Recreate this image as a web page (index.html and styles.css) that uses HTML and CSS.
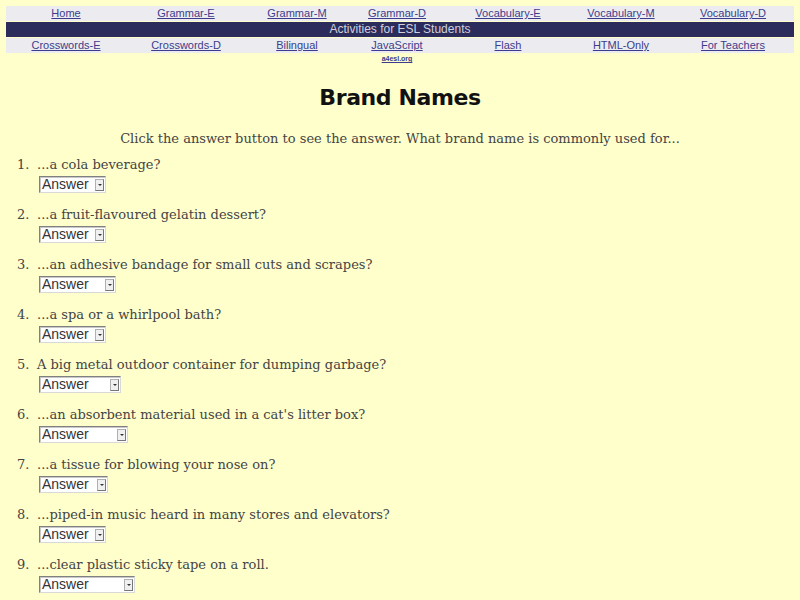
FILE: index.html
```html
<!DOCTYPE html>
<html>
<head>
<meta charset="utf-8">
<title>Brand Names</title>
<link rel="stylesheet" href="styles.css">
</head>
<body>
<div class="nav">
  <div class="nav-row">
    <a href="#">Home</a><a href="#">Grammar-E</a><a href="#">Grammar-M</a><a href="#">Grammar-D</a><a href="#">Vocabulary-E</a><a href="#">Vocabulary-M</a><a href="#">Vocabulary-D</a>
  </div>
  <div class="nav-title">Activities for ESL Students</div>
  <div class="nav-row">
    <a href="#">Crosswords-E</a><a href="#">Crosswords-D</a><a href="#">Bilingual</a><a href="#">JavaScript</a><a href="#">Flash</a><a href="#">HTML-Only</a><a href="#">For Teachers</a>
  </div>
  <div class="nav-sub">
    <span></span><span></span><span></span><a href="#">a4esl.org</a>
  </div>
</div>

<h1 class="title">Brand Names</h1>
<p class="intro">Click the answer button to see the answer. What brand name is commonly used for...</p>

<ol class="quiz">
  <li><span class="num">1.</span><div class="q"><div class="qt">...a cola beverage?</div><span class="pick" style="width:67px"><span class="pick-label">Answer</span><span class="arrow"></span></span></div></li>
  <li><span class="num">2.</span><div class="q"><div class="qt">...a fruit-flavoured gelatin dessert?</div><span class="pick" style="width:67px"><span class="pick-label">Answer</span><span class="arrow"></span></span></div></li>
  <li><span class="num">3.</span><div class="q"><div class="qt">...an adhesive bandage for small cuts and scrapes?</div><span class="pick" style="width:77px"><span class="pick-label">Answer</span><span class="arrow"></span></span></div></li>
  <li><span class="num">4.</span><div class="q"><div class="qt">...a spa or a whirlpool bath?</div><span class="pick" style="width:67px"><span class="pick-label">Answer</span><span class="arrow"></span></span></div></li>
  <li><span class="num">5.</span><div class="q"><div class="qt">A big metal outdoor container for dumping garbage?</div><span class="pick" style="width:82px"><span class="pick-label">Answer</span><span class="arrow"></span></span></div></li>
  <li><span class="num">6.</span><div class="q"><div class="qt">...an absorbent material used in a cat's litter box?</div><span class="pick" style="width:89px"><span class="pick-label">Answer</span><span class="arrow"></span></span></div></li>
  <li><span class="num">7.</span><div class="q"><div class="qt">...a tissue for blowing your nose on?</div><span class="pick" style="width:69px"><span class="pick-label">Answer</span><span class="arrow"></span></span></div></li>
  <li><span class="num">8.</span><div class="q"><div class="qt">...piped-in music heard in many stores and elevators?</div><span class="pick" style="width:67px"><span class="pick-label">Answer</span><span class="arrow"></span></span></div></li>
  <li><span class="num">9.</span><div class="q"><div class="qt">...clear plastic sticky tape on a roll.</div><span class="pick" style="width:96px"><span class="pick-label">Answer</span><span class="arrow"></span></span></div></li>
</ol>
</body>
</html>
```

FILE: styles.css
```css
html, body {
  margin: 0;
  padding: 0;
  background: #ffffcc;
}

body {
  padding: 6px 6px 0 6px;
  font-family: "DejaVu Serif", serif;
  color: #444;
}

/* site navigation */
.nav {
  display: flex;
  flex-direction: column;
  gap: 1px;
}

.nav-row,
.nav-sub {
  display: grid;
  grid-template-columns: 120fr 120fr 102fr 98fr 124fr 102fr 122fr;
}

.nav-row {
  background: #ececf0;
  height: 15px;
  align-items: center;
}

.nav-row a,
.nav-sub a {
  font-family: "Liberation Sans", Arial, sans-serif;
  font-size: 11px;
  color: #3c3c8c;
  text-align: center;
  line-height: 15px;
}

.nav-title {
  background: #2c2c5c;
  color: #d0d0dc;
  height: 15px;
  line-height: 15px;
  font-family: "Liberation Sans", Arial, sans-serif;
  font-size: 12px;
  text-align: center;
}

.nav-sub {
  height: 12px;
}

.nav-sub a {
  font-size: 7px;
  font-weight: bold;
  line-height: 10px;
}

/* heading and instructions */
.title {
  margin: 17px 0 0 0;
  text-align: center;
  font-family: "DejaVu Sans", sans-serif;
  font-weight: bold;
  font-size: 22px;
  line-height: 30px;
  color: #111;
  letter-spacing: -0.4px;
}

.intro {
  margin: 18px 0 0 0;
  text-align: center;
  font-size: 13px;
  line-height: 16px;
}

/* numbered questions */
.quiz {
  list-style: none;
  margin: 10px 0 0 0;
  padding: 0 0 0 11px;
  display: flex;
  flex-direction: column;
  gap: 14px;
}

.quiz li {
  display: flex;
  font-size: 13px;
  line-height: 16px;
}

.num {
  width: 20px;
  flex: none;
}

.q {
  display: flex;
  flex-direction: column;
  align-items: flex-start;
}

.qt {
  height: 16px;
}

/* answer drop-down */
.pick {
  margin: 3px 0 0 2px;
  height: 17px;
  box-sizing: border-box;
  background: #fff;
  border-style: solid;
  border-width: 1px;
  border-color: #808080 #d8d8d8 #d8d8d8 #808080;
  box-shadow: inset 1px 1px 0 #c8c8c8;
  display: flex;
  align-items: center;
  justify-content: space-between;
  padding: 0 1px 0 2px;
}

.pick-label {
  font-family: "Liberation Sans", Arial, sans-serif;
  font-size: 14px;
  color: #333;
  line-height: 15px;
}

.arrow {
  width: 9px;
  height: 12px;
  box-sizing: border-box;
  background: #f0f0f0;
  border: 1px solid #b0b0b0;
  border-right-color: #777;
  border-bottom-color: #777;
  display: flex;
  align-items: center;
  justify-content: center;
}

.arrow::after {
  content: "";
  border-left: 2px solid transparent;
  border-right: 2px solid transparent;
  border-top: 2px solid #333;
}
```
